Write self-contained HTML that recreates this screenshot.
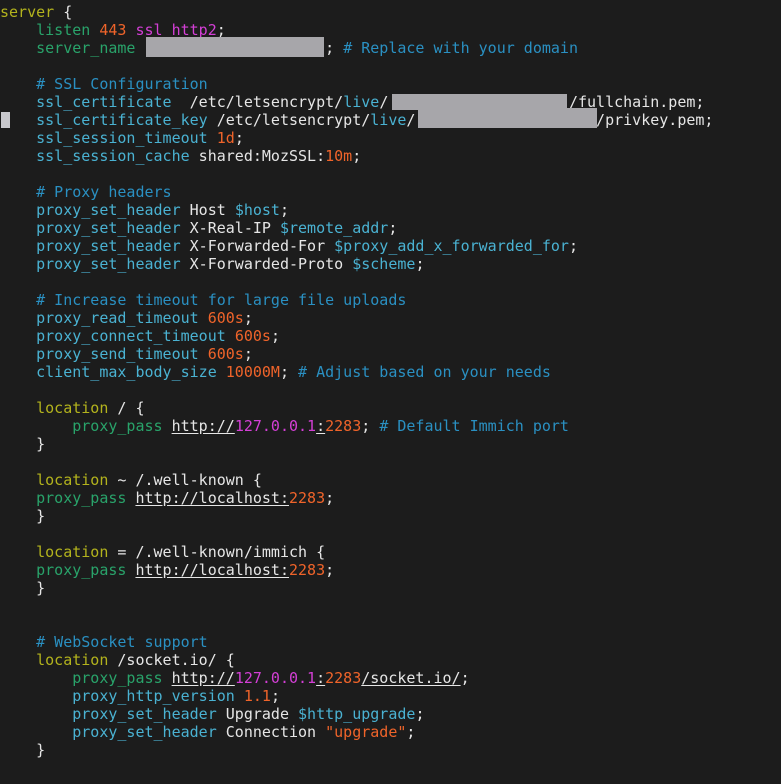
<!DOCTYPE html>
<html><head><meta charset="utf-8"><style>
html,body{margin:0;padding:0;background:#1c1c1c;}
body{width:781px;height:784px;overflow:hidden;position:relative;}
pre{margin:0;padding:3px 0 0 0;font-family:"DejaVu Sans Mono","Liberation Mono",monospace;font-size:15px;line-height:18px;color:#e6e6e6;white-space:pre;}
.y{color:#b3b31d}.g{color:#29a36a}.o{color:#f0642a}.m{color:#d43fd6}.c{color:#2a90c2}.k{color:#4ab2d2}
u{text-decoration:underline;text-underline-offset:2px}
.box{position:absolute;background:#a7a6aa;}
</style></head><body>
<pre><span class="y">server</span> {
    <span class="g">listen</span> <span class="o">443</span> <span class="m">ssl http2</span>;
    <span class="g">server_name</span>                     ; <span class="c"># Replace with your domain</span>

    <span class="c"># SSL Configuration</span>
    <span class="k">ssl_certificate</span>  /etc/letsencrypt/<span class="k">live</span>/                    /fullchain.pem;
    <span class="k">ssl_certificate_key</span> /etc/letsencrypt/<span class="k">live</span>/                    /privkey.pem;
    <span class="k">ssl_session_timeout</span> <span class="o">1d</span>;
    <span class="k">ssl_session_cache</span> shared:MozSSL:<span class="o">10m</span>;

    <span class="c"># Proxy headers</span>
    <span class="k">proxy_set_header</span> Host <span class="k">$host</span>;
    <span class="k">proxy_set_header</span> X-Real-IP <span class="k">$remote_addr</span>;
    <span class="k">proxy_set_header</span> X-Forwarded-For <span class="k">$proxy_add_x_forwarded_for</span>;
    <span class="k">proxy_set_header</span> X-Forwarded-Proto <span class="k">$scheme</span>;

    <span class="c"># Increase timeout for large file uploads</span>
    <span class="k">proxy_read_timeout</span> <span class="o">600s</span>;
    <span class="k">proxy_connect_timeout</span> <span class="o">600s</span>;
    <span class="k">proxy_send_timeout</span> <span class="o">600s</span>;
    <span class="k">client_max_body_size</span> <span class="o">10000M</span>; <span class="c"># Adjust based on your needs</span>

    <span class="y">location</span> / {
        <span class="g">proxy_pass</span> <u>http://</u><span class="m">127.0.0.1</span><u>:</u><span class="o">2283</span>; <span class="c"># Default Immich port</span>
    }

    <span class="y">location</span> ~ /.well-known {
    <span class="g">proxy_pass</span> <u>http://localhost:</u><span class="o">2283</span>;
    }

    <span class="y">location</span> = /.well-known/immich {
    <span class="g">proxy_pass</span> <u>http://localhost:</u><span class="o">2283</span>;
    }


    <span class="c"># WebSocket support</span>
    <span class="y">location</span> /socket.io/ {
        <span class="g">proxy_pass</span> <u>http://</u><span class="m">127.0.0.1</span><u>:</u><span class="o">2283</span><u>/socket.io/</u>;
        <span class="k">proxy_http_version</span> <span class="o">1.1</span>;
        <span class="k">proxy_set_header</span> Upgrade <span class="k">$http_upgrade</span>;
        <span class="k">proxy_set_header</span> Connection <span class="o">"upgrade"</span>;
    }
</pre>
<div class="box" style="left:146px;top:37px;width:178px;height:20px;"></div>
<div class="box" style="left:392px;top:94px;width:175px;height:16px;"></div>
<div class="box" style="left:418px;top:108px;width:179px;height:20px;"></div>
<div class="box" style="left:1px;top:112px;width:9px;height:16px;background:#c8c8cc;"></div>
</body></html>
